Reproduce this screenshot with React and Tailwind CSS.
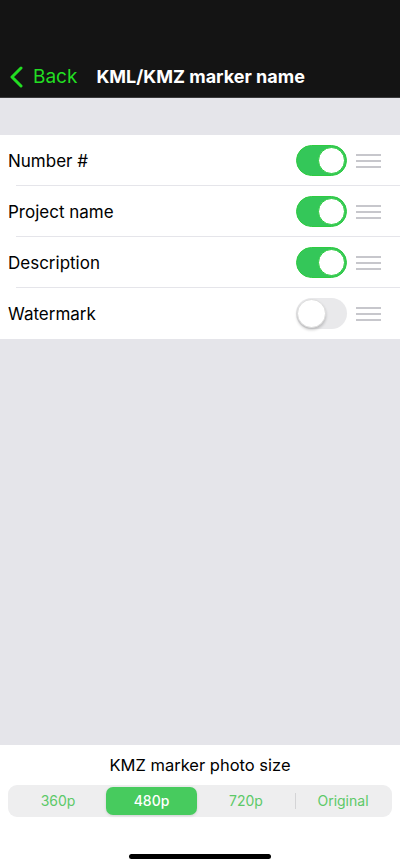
import React from "react";

const font = { fontFamily: "Inter, 'Noto Sans', 'Liberation Sans', sans-serif" };

function Toggle({ on }) {
  return on ? (
    <div className="w-[51px] h-[31px] rounded-full bg-[#34c759] border border-[#2ecc40] relative shrink-0">
      <div className="absolute right-[1px] top-[1px] w-[27px] h-[27px] rounded-full bg-white border border-[#2ecc40]" />
    </div>
  ) : (
    <div className="w-[51px] h-[31px] rounded-full bg-[#e9e9eb] relative shrink-0">
      <div className="absolute left-[1px] top-[1px] w-[29px] h-[29px] rounded-full bg-white shadow-[0_2px_3px_rgba(0,0,0,0.2)] border border-[#dcdcdc]" />
    </div>
  );
}

function Handle() {
  return (
    <div className="flex flex-col gap-[4px] w-[25px] shrink-0">
      <div className="h-[2px] bg-[#c7c7cc]" />
      <div className="h-[2px] bg-[#c7c7cc]" />
      <div className="h-[2px] bg-[#c7c7cc]" />
    </div>
  );
}

function Row({ label, on, last }) {
  return (
    <div className="relative h-[51px] flex items-center pl-[8px] pr-[19px] bg-white">
      <span className="flex-1 text-[17px] text-black pt-[2px]">{label}</span>
      <Toggle on={on} />
      <div className="ml-[9px]">
        <Handle />
      </div>
      {!last && <div className="absolute left-[16px] right-0 bottom-0 h-px bg-[#e5e5ea]" />}
    </div>
  );
}

export default function App() {
  return (
    <div className="w-[400px] h-[867px] flex flex-col bg-[#e5e5ea] overflow-hidden" style={font}>
      <div className="h-[98px] bg-[#141414] border-b border-[#3a3a3c] flex items-end pb-[6px] shrink-0">
        <div className="flex items-center pl-[9px]">
          <svg width="14" height="22" viewBox="0 0 14 22" fill="none">
            <path d="M12 2 L3 11 L12 20" stroke="#22dd22" strokeWidth="3" strokeLinecap="round" strokeLinejoin="round" />
          </svg>
          <span className="ml-[10px] text-[19px] text-[#22dd22]">Back</span>
          <span className="ml-[19px] text-[18px] font-bold text-white">KML/KMZ marker name</span>
        </div>
      </div>
      <div className="h-[37px] shrink-0" />
      <div className="flex flex-col shrink-0">
        <Row label="Number #" on />
        <Row label="Project name" on />
        <Row label="Description" on />
        <Row label="Watermark" on={false} last />
      </div>
      <div className="flex-1" />
      <div className="h-[122px] bg-white shrink-0 flex flex-col items-center pt-[8px]">
        <div className="text-[16.5px] text-black">KMZ marker photo size</div>
        <div className="mt-[7px] w-[384px] h-[32px] rounded-[9px] bg-[#eeeeef] flex items-center px-[2px] text-[14px]">
          <div className="w-[96px] text-center text-[#5cc968]">360p</div>
          <div className="w-[91px] h-[28px] rounded-[7px] bg-[#47cb5e] text-white font-medium flex items-center justify-center shadow-[0_1px_3px_rgba(0,0,0,0.12)]">480p</div>
          <div className="w-[98px] text-center text-[#5cc968]">720p</div>
          <div className="w-px h-[16px] bg-[#d4d4d6]" />
          <div className="flex-1 text-center text-[#5cc968]">Original</div>
        </div>
        <div className="mt-auto mb-[8px] w-[142px] h-[5px] rounded-full bg-black" />
      </div>
    </div>
  );
}
